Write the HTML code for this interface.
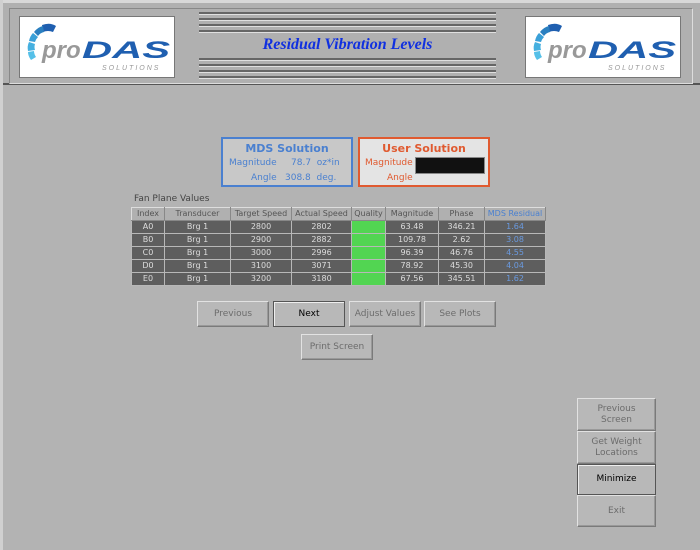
<!DOCTYPE html><html><head><style>
body{margin:0;width:700px;height:550px;background:#b3b3b3;font-family:"DejaVu Sans","Liberation Sans",sans-serif;position:relative;overflow:hidden}
.a{position:absolute}
.hdr{left:0;top:0;width:700px;height:85px;background:#b0b0b0;border-top:3px solid #d8d8d8;box-sizing:border-box;border-bottom:2px solid #555}
.logo{background:#fff;border:1px solid #777;width:154px;height:60px;top:16px}
.ln{left:199px;width:297px;height:2px;background:#666;border-bottom:1px solid #e0e0e0}
.btn{background:#b8b8b8;border:1px solid;border-color:#e2e2e2 #7a7a7a #7a7a7a #e2e2e2;box-shadow:inset -1px -1px 0 #999;font-size:9px;color:#6c6c6c;display:flex;align-items:center;justify-content:center;text-align:center;box-sizing:border-box;line-height:11px}
.dk{border-color:#555 #555 #555 #555;color:#000;box-shadow:inset 1px 1px 0 #eee}
table{border-collapse:collapse;font-size:8px;table-layout:fixed;font-family:"DejaVu Sans","Liberation Sans",sans-serif}
td{height:12px;line-height:12px;padding:0;text-align:center;border:1px solid #b8b8b8;white-space:nowrap;overflow:hidden}
tr.h td{background:#b0b0b0;color:#555;border-color:#ddd #888 #888 #ddd}
tr.r td{background:#5e5e5e;color:#ddd}
td.q{background:#52d552!important}
</style></head><body>
<div class="a hdr"></div>
<div class="a" style="left:0;top:0;width:3px;height:550px;background:#d0d0d0"></div>
<div class="a" style="left:9px;top:8px;width:682px;height:74px;border:1px solid #888;border-right-color:#ddd;border-bottom-color:#ddd"></div>
<div class="a logo" style="left:19px"><svg width="154" height="60"><g><path d="M22 8 q8-3 14 1 l-3 6 q-5-2-10 0z" fill="#1f5fb0"/><path d="M14 15 q4-5 9-6 l1 6 q-4 1-6 4z" fill="#2a7fc0"/><path d="M9 24 q1-5 4-8 l5 4 q-2 2-3 5z" fill="#3aa0d8"/><path d="M8 34 q-1-5 1-9 l6 2 q-1 3 0 6z" fill="#45b0e0"/><path d="M11 43 q-3-4-3-8 l6 -1 q0 3 2 6z" fill="#55c0e8"/></g><text x="22" y="41" font-family="Liberation Sans" font-style="italic" font-size="24" fill="#999" font-weight="bold">pro</text><text x="62" y="41" font-family="Liberation Sans" font-style="italic" font-weight="bold" font-size="24" fill="#1f5fb0" textLength="88" lengthAdjust="spacingAndGlyphs">DAS</text><text x="82" y="53" font-family="Liberation Sans" font-style="italic" font-size="7" fill="#999" letter-spacing="2">SOLUTIONS</text></svg></div>
<div class="a logo" style="left:525px"><svg width="154" height="60"><g><path d="M22 8 q8-3 14 1 l-3 6 q-5-2-10 0z" fill="#1f5fb0"/><path d="M14 15 q4-5 9-6 l1 6 q-4 1-6 4z" fill="#2a7fc0"/><path d="M9 24 q1-5 4-8 l5 4 q-2 2-3 5z" fill="#3aa0d8"/><path d="M8 34 q-1-5 1-9 l6 2 q-1 3 0 6z" fill="#45b0e0"/><path d="M11 43 q-3-4-3-8 l6 -1 q0 3 2 6z" fill="#55c0e8"/></g><text x="22" y="41" font-family="Liberation Sans" font-style="italic" font-size="24" fill="#999" font-weight="bold">pro</text><text x="62" y="41" font-family="Liberation Sans" font-style="italic" font-weight="bold" font-size="24" fill="#1f5fb0" textLength="88" lengthAdjust="spacingAndGlyphs">DAS</text><text x="82" y="53" font-family="Liberation Sans" font-style="italic" font-size="7" fill="#999" letter-spacing="2">SOLUTIONS</text></svg></div>
<div class="a ln" style="top:12px"></div><div class="a ln" style="top:18px"></div><div class="a ln" style="top:24px"></div><div class="a ln" style="top:30px"></div>
<div class="a ln" style="top:58px"></div><div class="a ln" style="top:64px"></div><div class="a ln" style="top:70px"></div><div class="a ln" style="top:76px"></div>
<div class="a" style="left:199px;width:297px;top:36px;text-align:center;font-family:'Liberation Serif',serif;font-style:italic;font-weight:bold;font-size:16px;color:#1030e0">Residual Vibration Levels</div>
<div class="a" style="left:221px;top:137px;width:132px;height:50px;box-sizing:border-box;border:2px solid #4a80d0;background:#c8c8c8;color:#4a80d0;font-size:9px">
<div style="text-align:center;font-size:11px;font-weight:bold;margin-top:3px">MDS Solution</div>
<div style="position:absolute;left:6px;top:19px">Magnitude</div><div style="position:absolute;left:68px;top:19px">78.7 &nbsp;oz*in</div>
<div style="position:absolute;left:28px;top:34px">Angle</div><div style="position:absolute;left:62px;top:34px">308.8 &nbsp;deg.</div></div>
<div class="a" style="left:358px;top:137px;width:132px;height:50px;box-sizing:border-box;border:2px solid #e05a30;background:#e4e4e4;color:#e05a30;font-size:9px">
<div style="text-align:center;font-size:11px;font-weight:bold;margin-top:3px">User Solution</div>
<div style="position:absolute;left:5px;top:19px">Magnitude</div><div style="position:absolute;left:55px;top:18px;width:68px;height:15px;background:#111;border:1px solid #888"></div>
<div style="position:absolute;left:27px;top:34px">Angle</div></div>
<div class="a" style="left:134px;top:194px;font-size:9px;color:#444">Fan Plane Values</div>
<table class="a" style="left:131px;top:207px;width:414px">
<colgroup><col style="width:33px"><col style="width:66px"><col style="width:61px"><col style="width:60px"><col style="width:34px"><col style="width:53px"><col style="width:46px"><col style="width:61px"></colgroup>
<tr class="h"><td>Index</td><td>Transducer</td><td>Target Speed</td><td>Actual Speed</td><td>Quality</td><td>Magnitude</td><td>Phase</td><td style="color:#4a80d0">MDS Residual</td></tr>
<tr class="r"><td>A0</td><td>Brg 1</td><td>2800</td><td>2802</td><td class="q"></td><td>63.48</td><td>346.21</td><td style="color:#6a9ae0">1.64</td></tr>
<tr class="r"><td>B0</td><td>Brg 1</td><td>2900</td><td>2882</td><td class="q"></td><td>109.78</td><td>2.62</td><td style="color:#6a9ae0">3.08</td></tr>
<tr class="r"><td>C0</td><td>Brg 1</td><td>3000</td><td>2996</td><td class="q"></td><td>96.39</td><td>46.76</td><td style="color:#6a9ae0">4.55</td></tr>
<tr class="r"><td>D0</td><td>Brg 1</td><td>3100</td><td>3071</td><td class="q"></td><td>78.92</td><td>45.30</td><td style="color:#6a9ae0">4.04</td></tr>
<tr class="r"><td>E0</td><td>Brg 1</td><td>3200</td><td>3180</td><td class="q"></td><td>67.56</td><td>345.51</td><td style="color:#6a9ae0">1.62</td></tr>
</table>
<div class="a btn" style="left:197px;top:301px;width:72px;height:26px">Previous</div>
<div class="a btn dk" style="left:273px;top:301px;width:72px;height:26px">Next</div>
<div class="a btn" style="left:349px;top:301px;width:72px;height:26px">Adjust Values</div>
<div class="a btn" style="left:424px;top:301px;width:72px;height:26px">See Plots</div>
<div class="a btn" style="left:301px;top:334px;width:72px;height:26px">Print Screen</div>
<div class="a btn" style="left:577px;top:398px;width:79px;height:33px">Previous<br>Screen</div>
<div class="a btn" style="left:577px;top:431px;width:79px;height:33px">Get Weight<br>Locations</div>
<div class="a btn dk" style="left:577px;top:464px;width:79px;height:31px">Minimize</div>
<div class="a btn" style="left:577px;top:495px;width:79px;height:32px">Exit</div>
</body></html>
